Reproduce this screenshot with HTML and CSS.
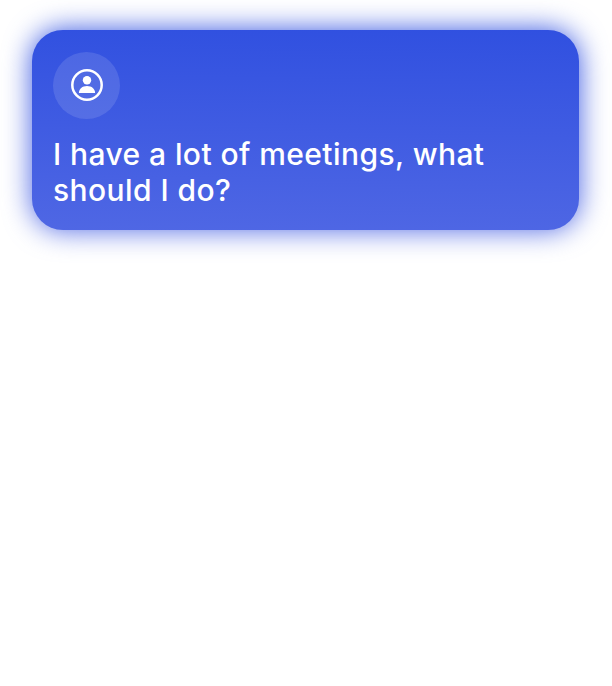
FILE: index.html
```html
<!DOCTYPE html>
<html lang="en">
<head>
<meta charset="utf-8">
<title>Chat</title>
<link rel="stylesheet" href="styles.css">
</head>
<body>
<main class="chat">
  <article class="message">
    <div class="avatar">
      <svg class="avatar-icon" viewBox="0 0 34 34" aria-hidden="true">
        <circle cx="17" cy="17" r="14.700" fill="none" stroke="#fff" stroke-width="2.500"/>
        <circle cx="17" cy="12.200" r="4.200" fill="#fff"/>
        <path d="M8.900 25c0-4.200 3.400-7 8.100-7s8.100 2.800 8.100 7z" fill="#fff"/>
      </svg>
    </div>
    <p class="message-text">I have a lot of meetings, what should I do?</p>
  </article>
</main>
</body>
</html>
```
FILE: styles.css
```css
* {
  box-sizing: border-box;
}

body {
  margin: 0;
  background: #fff;
  font-family: Inter, sans-serif;
}

.chat {
  min-height: 686px;
  overflow: hidden;
  padding: 30.300px 33.300px 0 32px;
}

.message {
  position: relative;
  isolation: isolate;
  height: 200px;
  padding: 21.500px 21px;
  border-radius: 31px;
  color: #fff;
}

.message::before,
.message::after {
  content: "";
  position: absolute;
  inset: 0;
  z-index: -1;
  border-radius: inherit;
  background: linear-gradient(181deg, #3050e0, #4f67e4);
}

.message::before {
  filter: blur(14px);
}

.avatar {
  display: flex;
  align-items: center;
  justify-content: center;
  width: 67px;
  height: 67px;
  border-radius: 50%;
  background: rgba(255, 255, 255, 0.12);
}

.avatar-icon {
  width: 34px;
  height: 34px;
}

.message-text {
  margin: 17.200px 0 0;
  font-size: 30px;
  font-weight: 450;
  line-height: 36px;
  letter-spacing: 0.420px;
}
```
